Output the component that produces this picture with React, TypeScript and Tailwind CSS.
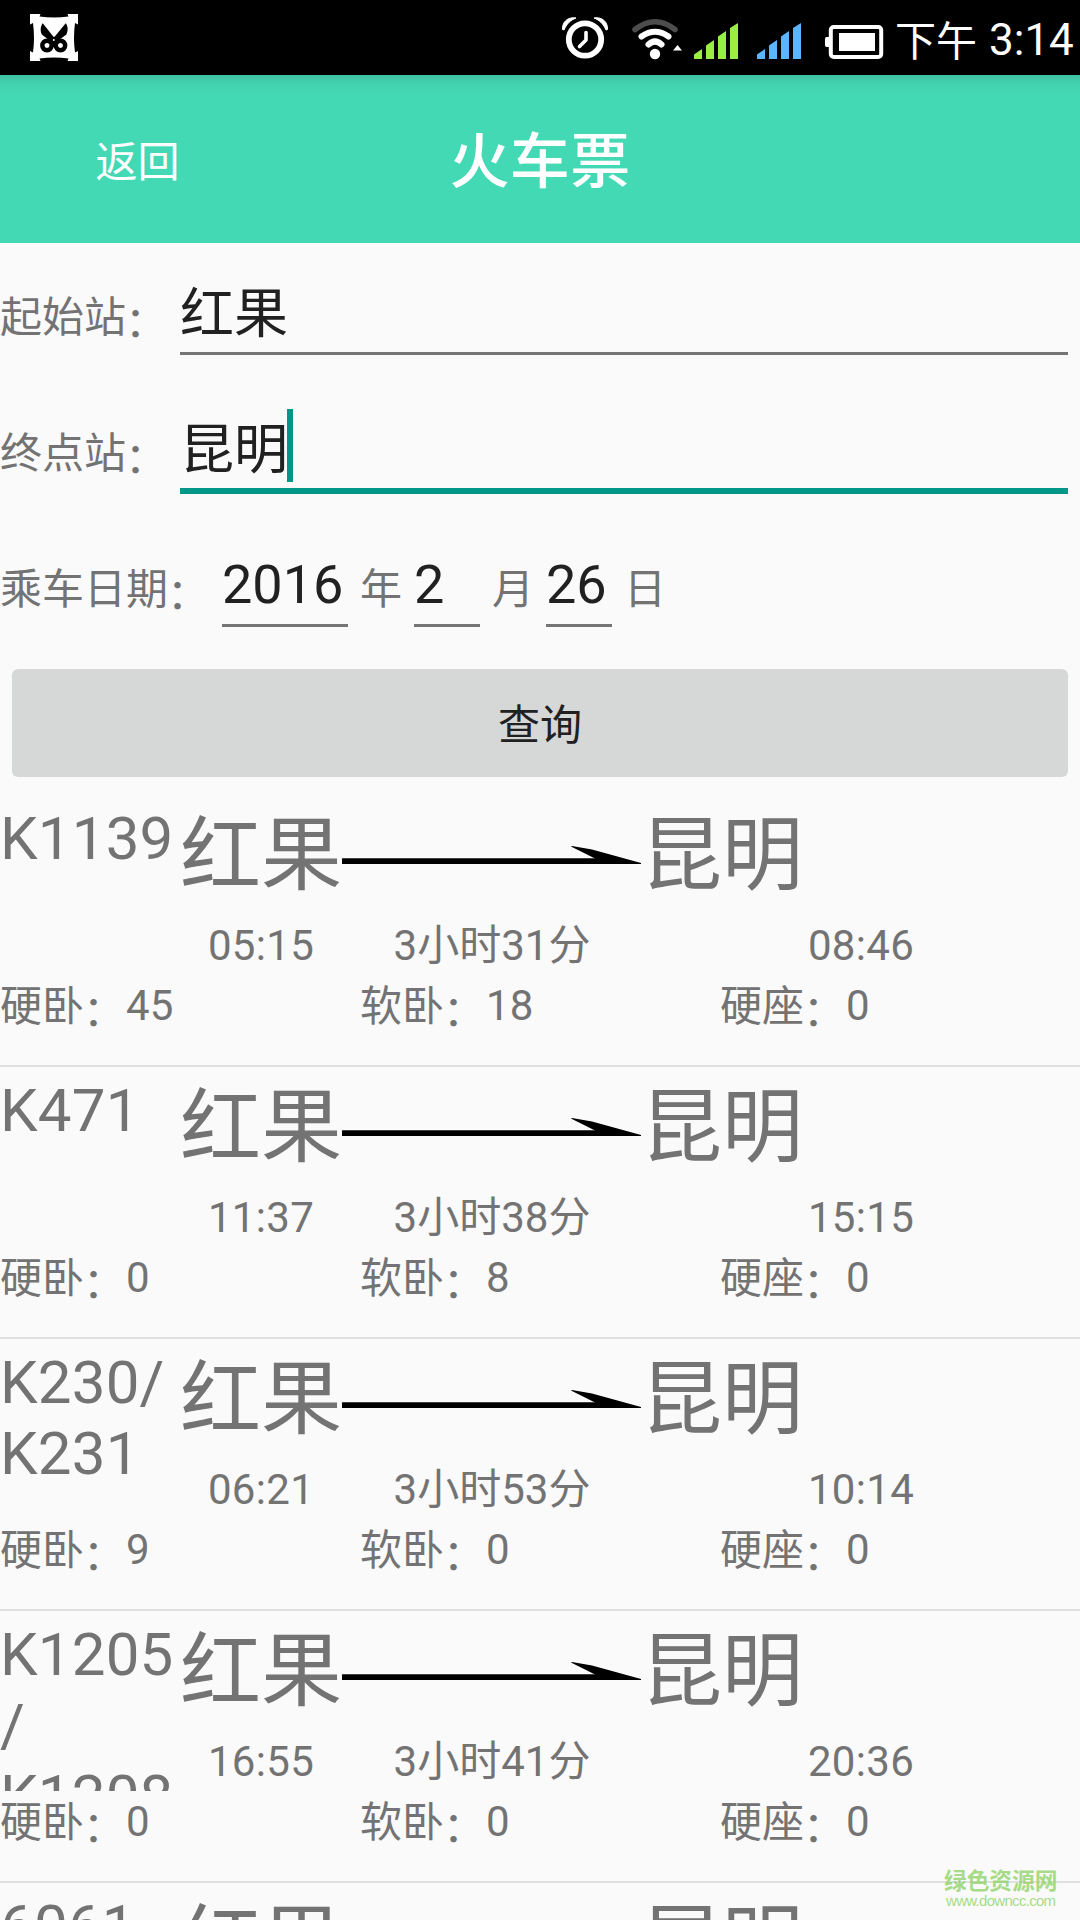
type Train = {
	code: string[];
	from: string;
	to: string;
	depart: string;
	duration: string;
	arrive: string;
	seats: { label: string; count: number }[];
};

const seats = (hardSleeper: number, softSleeper: number, hardSeat: number) => [
	{ label: "硬卧", count: hardSleeper },
	{ label: "软卧", count: softSleeper },
	{ label: "硬座", count: hardSeat },
];

// code is split into the lines it wraps to in the narrow first column
const trains: Train[] = [
	{ code: ["K1139"], from: "红果", to: "昆明", depart: "05:15", duration: "3小时31分", arrive: "08:46", seats: seats(45, 18, 0) },
	{ code: ["K471"], from: "红果", to: "昆明", depart: "11:37", duration: "3小时38分", arrive: "15:15", seats: seats(0, 8, 0) },
	{ code: ["K230/", "K231"], from: "红果", to: "昆明", depart: "06:21", duration: "3小时53分", arrive: "10:14", seats: seats(9, 0, 0) },
	{ code: ["K1205", "/", "K1208"], from: "红果", to: "昆明", depart: "16:55", duration: "3小时41分", arrive: "20:36", seats: seats(0, 0, 0) },
	{ code: ["6061"], from: "红果", to: "昆明", depart: "", duration: "", arrive: "", seats: [] },
];

function ScreenshotIcon() {
	return (
		<svg width="48" height="48" viewBox="0 0 48 48">
			<path d="M0 0h10.500l-1 2.500Q24 4.500 38.500 2.500L37.500 0H48v10.500l-3-1.500Q43 24 45 38.500l3-1.500V47H37.500l1-2.500Q24 42.500 9.500 44.500l1 2.500H0V37l3 1.500Q5 24 3 9L0 10.500Z" fill="#fff" />
			<path d="M12.800 9.300C10.500 12 10 17 11.800 20.500L19 26l5-2.500ZM35.700 9.300C38 12 38.300 17 36.400 20.500L29 26l-5-2.500Z" fill="#000" />
			<path d="M20 25l4-2.500 4 2.500v8h-8Z" fill="#000" />
			<circle cx="17" cy="31.500" r="4.700" fill="#fff" stroke="#000" strokeWidth="4.400" />
			<circle cx="30.500" cy="31.500" r="4.700" fill="#fff" stroke="#000" strokeWidth="4.400" />
			<circle cx="23.800" cy="26" r="1" fill="#fff" />
		</svg>
	);
}

function AlarmIcon() {
	return (
		<svg width="46" height="44" viewBox="0 0 46 44">
			<circle cx="23" cy="23.500" r="16.200" fill="none" stroke="#fff" strokeWidth="5.800" />
			<path d="M24 16.500V24l-6.500 6.500" fill="none" stroke="#fff" strokeWidth="3.600" strokeLinecap="round" strokeLinejoin="round" />
			<path d="M.500 13.500C0 6 6 .500 14 2 8.500 4 4.500 8 2 14ZM45.500 13.500C46 6 40 .500 32 2c5.500 2 9.500 6 12 12Z" fill="#fff" stroke="#fff" />
		</svg>
	);
}

function WifiIcon() {
	return (
		<svg width="52" height="44" viewBox="0 0 52 44" fill="none" strokeLinecap="round">
			<path d="M5 13.500Q25 -2 45 13.500" stroke="#4d4d4d" strokeWidth="5.500" />
			<path d="M11.500 20.500Q25 11 38.500 20.500" stroke="#fff" strokeWidth="6" />
			<path d="M18.500 28.500Q25 22.500 31.500 28.500" stroke="#fff" strokeWidth="6" />
			<circle cx="25" cy="38" r="5.200" fill="#fff" />
			<path d="M43 34.500l4.500-5.500 4.500 5.500Z" fill="#fff" />
		</svg>
	);
}

function SignalIcon({ color }: { color: string }) {
	return (
		<svg width="44" height="36" viewBox="0 0 44 36" fill={color}>
			<path d="M0 31.500l8-5.500v10H0ZM12 22.500l8-5.500v19h-8ZM24 13.500L32 8v28h-8ZM36 5l8-5v36h-8Z" />
		</svg>
	);
}

function BatteryIcon() {
	return (
		<svg width="59" height="34" viewBox="0 0 59 34">
			<rect x="5.800" y="2" width="50.400" height="30" rx="3" fill="none" stroke="#fff" strokeWidth="4" />
			<path d="M1.500 12H4v10H1.500Q0 22 0 20v-6q0-2 1.500-2Z" fill="#fff" />
			<rect x="14" y="8" width="36" height="18" fill="#fff" />
		</svg>
	);
}

function RouteArrow() {
	return (
		<svg width="300" height="20" viewBox="0 0 300 20" className="mt-[50px]">
			<path d="M0 13.500H253L229 1.500l1-.500 20 3.500 20 5.500L299 18v1H0Z" fill="#000" />
			<path d="M0 13.500h253" stroke="#444" />
		</svg>
	);
}

function StatusBar() {
	return (
		<div className="flex h-[75px] bg-black text-white">
			<div className="ml-[30px] mt-[14px] flex-1">
				<ScreenshotIcon />
			</div>
			<div className="mt-4 w-[68px]">
				<AlarmIcon />
			</div>
			<div className="mt-4 w-[64px]">
				<WifiIcon />
			</div>
			<div className="mt-[23px] w-[63px]">
				<SignalIcon color="#99ee44" />
			</div>
			<div className="mt-[23px] w-[68px]">
				<SignalIcon color="#5cb5ff" />
			</div>
			<div className="mt-[25px] w-[70px]">
				<BatteryIcon />
			</div>
			<div className="flex w-[185px] whitespace-nowrap leading-[79px]">
				<span className="pt-[3px] text-[41px]">下午</span>
				<span className="ml-3 pt-px text-[44px]">3:14</span>
			</div>
		</div>
	);
}

function TitleBar() {
	return (
		<header className="grid h-[168px] grid-cols-[270px_540px_270px] items-center bg-[#44d9b5] bg-[linear-gradient(rgba(0,0,0,0.12),rgba(0,0,0,0.04)_8px,transparent_20px)] pt-2 text-center text-white">
			<button className="pl-[5px] text-[42px] leading-[46px]">返回</button>
			<h1 className="text-[60px] font-medium leading-[70px] tracking-[0.4px]">火车票</h1>
		</header>
	);
}

function Colon() {
	return <span className="relative -left-px top-[5px]">：</span>;
}

function StationRow({ label, value, focused = false }: { label: string; value: string; focused?: boolean }) {
	return (
		<div className="flex h-[136px] items-baseline pr-3 pt-[39px]">
			<label className="relative -top-px w-[180px] text-[42px] leading-[48px]">
				{label}
				<Colon />
			</label>
			<div
				className={
					focused
						? "flex flex-1 border-b-[6px] border-[#009688] pb-[5px] text-[54px] leading-[65px] text-[#212121]"
						: "flex flex-1 border-b-[3px] border-[#757575] pb-[5px] text-[54px] leading-[65px] text-[#212121]"
				}
			>
				{value}
				{focused && <span className="mb-px -ml-px -mt-[9px] w-[6px] bg-[#009688]" />}
			</div>
		</div>
	);
}

function DateRow() {
	const field = "border-b-[3px] border-[#757575] pb-[7px] text-[54px] leading-[65px] text-[#212121]";
	return (
		<div className="flex h-[136px] items-baseline pt-[37px] text-[42px] leading-[48px]">
			<span className="relative top-px w-[222px]">
				乘车日期
				<Colon />
			</span>
			<span className={`${field} w-[126px]`}>2016</span>
			<span className="relative top-px w-[66px] pl-3">年</span>
			<span className={`${field} w-[66px]`}>2</span>
			<span className="relative top-px w-[66px] pl-3">月</span>
			<span className={`${field} w-[66px]`}>26</span>
			<span className="relative top-px pl-3">日</span>
		</div>
	);
}

function TrainRow({ train }: { train: Train }) {
	return (
		<li className="h-[272px] shrink-0 border-b-2 border-[#e0e0e0]">
			<div className="flex h-[180px] overflow-hidden">
				<div className="w-[180px] pt-[8px] text-[60px] leading-[71px] tracking-[0.2px]">
					{train.code.map((line) => (
						<p key={line}>{line}</p>
					))}
				</div>
				<div className="grid flex-1 grid-cols-[162px_300px_438px] grid-rows-[121px_59px]">
					<span className="whitespace-nowrap text-[81px] leading-[122px]">{train.from}</span>
					<RouteArrow />
					<span className="-ml-px whitespace-nowrap text-[81px] leading-[122px]">{train.to}</span>
					<span className="text-center text-[42px] leading-[60px] tracking-[0.3px]">{train.depart}</span>
					<span className="text-center text-[42px] leading-[60px]">{train.duration}</span>
					<span className="text-center text-[42px] leading-[60px] tracking-[0.3px]">{train.arrive}</span>
				</div>
			</div>
			<div className="grid grid-cols-3 text-[42px] leading-[61px]">
				{train.seats.map((seat) => (
					<span key={seat.label}>
						<span className="relative top-px">
							{seat.label}
							<Colon />
						</span>
						{seat.count}
					</span>
				))}
			</div>
		</li>
	);
}

export default function App() {
	return (
		<div className="relative flex h-[1920px] w-[1080px] flex-col overflow-hidden bg-[#fafafa] font-[Roboto,'Noto_Sans_CJK_SC',sans-serif] text-[#737373]">
			<StatusBar />
			<TitleBar />
			<StationRow label="起始站" value="红果" />
			<StationRow label="终点站" value="昆明" focused />
			<DateRow />
			<div className="px-3 py-[18px]">
				<button className="block h-[108px] w-full rounded-[6px] bg-[#d6d8d7] text-[42px] leading-[114px] text-[#212121]">
					查询
				</button>
			</div>
			<ul className="min-h-0 flex-1 overflow-hidden">
				{trains.map((train) => (
					<TrainRow key={train.code[0]} train={train} />
				))}
			</ul>
			<div className="absolute left-[944px] top-[1869px] whitespace-nowrap text-[#8fd468]/80">
				<p className="text-[22.700px] font-bold leading-[26px]">绿色资源网</p>
				<p className="-mt-[3px] pl-[2px] font-['Liberation_Sans',sans-serif] text-[15px] leading-[17px] tracking-[-0.7px]">
					www.downcc.com
				</p>
			</div>
		</div>
	);
}
